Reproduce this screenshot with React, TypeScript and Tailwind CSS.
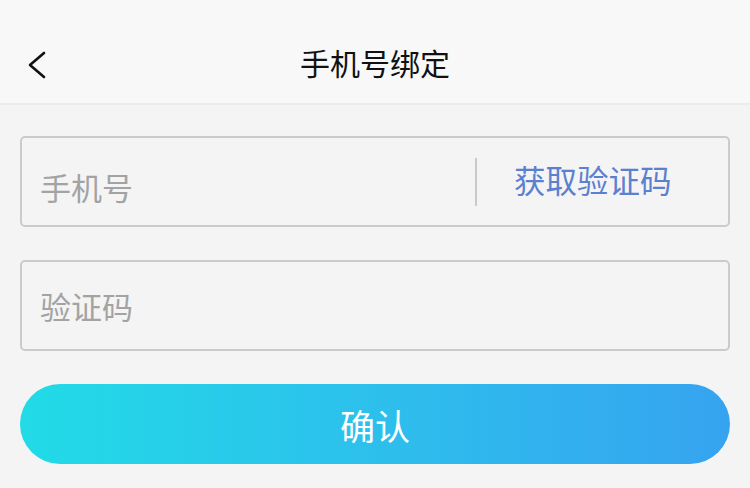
import React from 'react';

const font = { fontFamily: '"Noto Sans CJK SC", "Noto Sans", sans-serif' };

const App = () => {
    return (
        <div className="w-[750px] h-[488px] bg-[#f4f4f4] overflow-hidden" style={font}>
            {/* Header */}
            <div className="relative h-[105px] bg-[#f8f8f9] border-b-2 border-[#ececee] flex items-center justify-center">
                <svg className="absolute left-[24px] top-[51px]" width="24" height="28" viewBox="0 0 24 28" fill="none">
                    <path d="M20 2 L6 14 L20 26" stroke="#111" strokeWidth="2.6" strokeLinecap="round" strokeLinejoin="round" />
                </svg>
                <h1 className="text-[30px] text-[#111] font-normal leading-none mt-[20px]">手机号绑定</h1>
            </div>

            <div className="px-[20px] pt-[31px] flex flex-col">
                {/* Phone input */}
                <div className="h-[91px] border-2 border-[#cbcbcb] rounded-[5px] flex items-center">
                    <span className="pl-[18px] flex-1 text-[31px] text-[#a3a3a3] leading-none mt-[10px]">手机号</span>
                    <div className="w-[2px] h-[48px] bg-[#c9c9c9]" />
                    <span className="w-[251px] pl-[37px] text-[31.5px] text-[#5b80cf] leading-none -mt-[4px]">获取验证码</span>
                </div>

                {/* Code input */}
                <div className="mt-[33px] h-[91px] border-2 border-[#cbcbcb] rounded-[5px] flex items-center">
                    <span className="pl-[18px] text-[31px] text-[#a3a3a3] leading-none">验证码</span>
                </div>

                {/* Confirm button */}
                <button className="mt-[33px] h-[80px] rounded-full bg-gradient-to-r from-[#21dbe6] to-[#36a3f0] text-white text-[35px] leading-none">
                    确认
                </button>
            </div>
        </div>
    );
};

export default App;
